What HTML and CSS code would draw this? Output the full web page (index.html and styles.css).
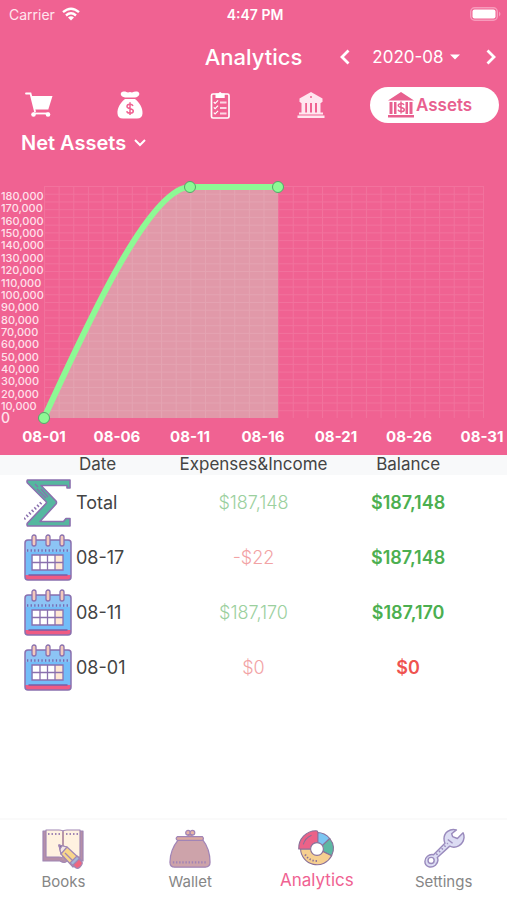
FILE: index.html
```html
<!DOCTYPE html>
<html lang="en">
<head>
<meta charset="utf-8">
<meta name="viewport" content="width=device-width, initial-scale=1">
<title>Analytics</title>
<link rel="stylesheet" href="styles.css">
</head>
<body>
<svg class="defs" aria-hidden="true">
  <defs>
    <symbol id="calendar" viewBox="0 0 48 48">
      <rect x="1" y="6" width="46" height="40" rx="3" fill="#73bdf8"/>
      <path d="M4 7h40a3 3 0 0 1 3 3v8H1v-8a3 3 0 0 1 3-3z" fill="#8cc4f5"/>
      <path d="M1 41h46v2a3 3 0 0 1-3 3H4a3 3 0 0 1-3-3z" fill="#ef5b84"/>
      <rect x="1" y="6" width="46" height="40" rx="3" fill="none" stroke="#8a70ae" stroke-width="1.500"/>
      <path d="M3 16.500h42" stroke="#7668b0" stroke-width="2.400" stroke-dasharray="1.300 2.300"/>
      <path d="M5 41h38" stroke="#7660a8" stroke-width="1.500" stroke-linecap="round"/>
      <rect x="8.500" y="21" width="30" height="15" fill="#fff"/>
      <path d="M31 21h8v15h-8z" fill="#ffe8d3"/>
      <path d="M8 21h31v15H8zM16 21v15M23.500 21v15M31 21v15M8 28.500h31" fill="none" stroke="#8a70ae" stroke-width="1.300"/>
      <g fill="#f3c8bb" stroke="#8a70ae" stroke-width="1.300"><rect x="8" y="1" width="4" height="11" rx="2"/><rect x="22" y="1" width="4" height="11" rx="2"/><rect x="36" y="1" width="4" height="11" rx="2"/></g>
    </symbol>
  </defs>
</svg>
<div class="app">
  <header class="top">
    <div class="status">
      <div class="carrier">Carrier
        <svg width="18" height="14" viewBox="0 0 18 14" fill="none" stroke="#fff" stroke-width="2.400"><path d="M1 5.200q8-7 16 0M4 8.500q5-4.300 10 0"/><path d="M9 13.500 6 10.600q3-2.500 6 0z" fill="#fff" stroke="none"/></svg>
      </div>
      <div class="clock">4:47 PM</div>
      <svg class="battery" width="31" height="14" viewBox="0 0 31 14"><rect x=".7" y=".7" width="26.600" height="12.600" rx="4" fill="none" stroke="#f79bbc" stroke-width="1.400"/><rect x="2.500" y="2.500" width="23" height="9" rx="2" fill="#fff"/><path d="M29 4.500v5q3-2.500 0-5" fill="#f79bbc"/></svg>
    </div>
    <div class="titlebar">
      <h1>Analytics</h1>
      <div class="period">
        <button type="button" aria-label="Previous month"><svg width="10" height="16" viewBox="0 0 10 16"><path d="M8.500 1.500 2 8l6.500 6.500" fill="none" stroke="#fff" stroke-width="2.800"/></svg></button>
        <button type="button" class="month">2020-08<svg width="10" height="6" viewBox="0 0 10 6"><path d="M0 .5h10L5 5.500z" fill="#fff"/></svg></button>
        <button type="button" class="next" aria-label="Next month"><svg width="10" height="16" viewBox="0 0 10 16"><path d="M1.500 1.500 8 8l-6.500 6.500" fill="none" stroke="#fff" stroke-width="2.800"/></svg></button>
      </div>
    </div>
    <nav class="tabs" aria-label="Reports">
      <div class="tab-icons">
        <button type="button" aria-label="Expenses"><svg width="28" height="28" viewBox="0 0 28 28"><path d="M1 2.500h4.500l4.500 18" fill="none" stroke="#fff" stroke-width="1.800" stroke-linecap="round"/><path d="M6 5h21.500l-4.200 13.500H9.500z" fill="#fff"/><path d="M8 22.500h16" stroke="#fff" stroke-width="1.800"/><circle cx="8.500" cy="23.500" r="2.300" fill="#fff"/><circle cx="23" cy="23.500" r="2.300" fill="#fff"/></svg></button>
        <button type="button" aria-label="Income"><svg width="28" height="28" viewBox="0 0 28 28"><path d="M9 6.500C4.500 6 3.500 2 6.500.8 9 0 10.500 1 12 1.600q2-1.200 4 0C18 .4 20 0 22 .8c2.500 1.500 1.500 5.300-3 5.700z" fill="#fff"/><path d="M9 8h10c4 3 8 9 7.500 14.500-.2 3.500-2 5-5.500 5H7c-3.500 0-5.300-1.500-5.500-5C1 17 5 11 9 8z" fill="#fff"/><path d="M17 15c-1-2.500-6-2.300-6 .4 0 3 6.300 1.700 6.300 4.600 0 3-5.800 3-6.600.3M14 11.300v12.600" fill="none" stroke="#f06292" stroke-width="1.500"/></svg></button>
        <button type="button" aria-label="Plans"><svg width="28" height="28" viewBox="0 0 28 28" fill="none" stroke="#fff"><rect x="5.500" y="3" width="17.500" height="24" rx="1.500" stroke-width="1.700"/><path d="M9.500 2.500h2.800q1.800-3 3.600 0h2.800V7H9.500z" fill="#fff" stroke="none"/><path d="m7.800 11 1.300 1.300 3-3m-4.300 7 1.300 1.300 3-3m-4.300 7 1.300 1.300 3-3" stroke-width="1.200"/><path d="M14 11.500h6.500M14 17h6.500M14 22.500h6.500" stroke-width="2" stroke-opacity=".75"/></svg></button>
        <button type="button" aria-label="Bank"><svg width="28" height="28" viewBox="0 0 28 28"><path d="M2.500 7.500 14 1l11.500 6.500V11h-23z" fill="#ffe6ef"/><circle cx="14" cy="6" r="1" fill="#f06292"/><g fill="#ffe6ef"><path d="M3.500 10h21v2h-21zM4.500 12h3.700v10H4.500zM10 12h3v10h-3zM15 12h3v10h-3zM20 12h3.500v10H20z"/><path d="M2 21.500h24v2H2zM.5 24.500h27V27H.5z"/></g></svg></button>
      </div>
      <button type="button" class="tab-active" aria-current="page"><svg width="28" height="28" viewBox="0 0 28 28" fill="#e8608f"><path d="M1 9.500 14 1l13 8.500zM2.500 11h3v12h-3zM7 11h2.500v12H7zM18.500 11H21v12h-2.500zM22.500 11h3v12h-3zM1 24h26v2.500H1z"/><path d="M17 14c-1-2-5.700-1.800-5.700.5 0 2.500 6 1.500 6 4.200 0 2.400-5.300 2.500-6.300.1M14 10.500v12" fill="none" stroke="#e8608f" stroke-width="1.500"/></svg>Assets</button>
    </nav>
    <button type="button" class="metric">Net Assets<svg width="12" height="8" viewBox="0 0 12 8"><path d="m1 1 5 5 5-5" fill="none" stroke="#fff" stroke-width="2"/></svg></button>
    <svg class="chart" viewBox="0 0 507 299" role="img" aria-label="Net assets by day">
      <defs>
        <pattern id="grid" x="44" y="30" width="14.633" height="7.733" patternUnits="userSpaceOnUse"><path d="M0 .5h14.633M.5 0v7.733" fill="none" stroke="#fff" stroke-opacity=".1"/></pattern>
      </defs>
      <path d="M44 262C88 166 150 31 190 31H278V262z" fill="#dcacb0" fill-opacity=".75"/>
      <rect x="44" y="30" width="440" height="232" fill="url(#grid)"/>
      <path d="M44 262C88 166 150 31 190 31H278" fill="none" stroke="#8df994" stroke-width="6"/>
      <g fill="#8df994" stroke="#54a76a" stroke-width="1"><circle cx="44" cy="262" r="5.500"/><circle cx="190" cy="31" r="5.500"/><circle cx="278" cy="31" r="5.500"/></g>
      <g class="y-axis">
        <text x="1" y="44">180,000</text><text x="1" y="56">170,000</text><text x="1" y="69">160,000</text><text x="1" y="81">150,000</text><text x="1" y="93">140,000</text><text x="1" y="106">130,000</text><text x="1" y="118">120,000</text><text x="1" y="131">110,000</text><text x="1" y="143">100,000</text><text x="1" y="155">90,000</text><text x="1" y="168">80,000</text><text x="1" y="180">70,000</text><text x="1" y="192">60,000</text><text x="1" y="205">50,000</text><text x="1" y="217">40,000</text><text x="1" y="229">30,000</text><text x="1" y="242">20,000</text><text x="1" y="254">10,000</text><text class="zero" x="1" y="267">0</text>
      </g>
      <g class="x-axis">
        <text x="44" y="286">08-01</text><text x="117" y="286">08-06</text><text x="190" y="286">08-11</text><text x="263" y="286">08-16</text><text x="336" y="286">08-21</text><text x="409" y="286">08-26</text><text x="482" y="286">08-31</text>
      </g>
    </svg>
  </header>
  <main>
    <table>
      <thead><tr><th>Date</th><th>Expenses&amp;Income</th><th>Balance</th><th class="end"></th></tr></thead>
      <tbody>
        <tr><td><div class="day"><svg width="48" height="48" viewBox="0 0 48 48"><path d="M3.500 1H46v8h-3V6.500H17l15 15.500q1 1.500 0 3L16 42.500h23.500l2.500-3h4V47H3.500q-1-1.500 0-3L22 24.500q1-1 0-2L3.500 4q-1-1.500 0-3z" fill="#55b79f" stroke="#8a70ae" stroke-width="1.600" stroke-linejoin="round"/><path d="m11 5 3 3m-1 2 9 9m-5-9 7 8" stroke="#8a70ae" stroke-width="1.200"/><path d="m0 40 18-17" stroke="#8a70ae" stroke-width="3" stroke-dasharray="1.500 2.200"/></svg>Total</div></td><td class="gain">$187,148</td><td class="gain strong">$187,148</td><td></td></tr>
        <tr><td><div class="day"><svg width="48" height="48"><use href="#calendar"/></svg>08-17</div></td><td class="loss">-$22</td><td class="gain strong">$187,148</td><td></td></tr>
        <tr><td><div class="day"><svg width="48" height="48"><use href="#calendar"/></svg>08-11</div></td><td class="gain">$187,170</td><td class="gain strong">$187,170</td><td></td></tr>
        <tr><td><div class="day"><svg width="48" height="48"><use href="#calendar"/></svg>08-01</div></td><td class="loss">$0</td><td class="loss strong">$0</td><td></td></tr>
      </tbody>
    </table>
  </main>
  <nav class="bottom" aria-label="Main">
    <a href="#books"><svg width="44" height="42" viewBox="0 0 44 42" stroke="#a086b4" stroke-width="1.200" stroke-linejoin="round"><path d="M2 3h40v30H26q-2 3-7 0H2z" fill="#b58fa8"/><path d="M5 2h13q4 0 4 2 0-2 4-2h13v27H26q-4 0-4 3 0-3-4-3H5z" fill="#fff2e0"/><path d="M22 4v28" stroke-width="2" stroke="#b896a8"/><path d="M7 6h12m6 0h12" stroke-width="2" stroke-dasharray="1.500 2"/><path d="m18 17 8 2 13 12-7 8-12-13z" fill="#f8d68b"/><path d="m18 17 8 2-6 7z" fill="#f4e8e4"/><path d="m18 17 3 1-2 3z" fill="#777098"/><path d="m24 25 8 8"/><path d="m36 28 4 4-6 7-5-4z" fill="#a4b8d8"/><path d="m38 31 3 3q1 2-2 5-2 2-4 1l-3-3z" fill="#ef6680"/></svg>Books</a>
    <a href="#wallet"><svg width="44" height="42" viewBox="-1 -1 46 44" stroke="#a184b6" stroke-width="1.300" stroke-linejoin="round"><circle cx="20" cy="4" r="2.500" fill="#e8b5a4"/><circle cx="24.500" cy="4" r="2.500" fill="#e8b5a4"/><path d="M20 6h4v4h-4z" fill="#d99b91"/><path d="M10 11h25c4 5 8 14 8 24q0 5-5 5H6q-5 0-5-5c0-10 5-19 9-24z" fill="#cda3aa"/><path d="M9 8h26q2 2 0 4H9q-3-2 0-4z" fill="#dcaaa0"/><path d="M4 35h36" stroke-width="2.200" stroke-dasharray="1.500 1.800"/></svg>Wallet</a>
    <a href="#analytics" class="current" aria-current="page"><svg width="44" height="42" viewBox="-2 -1 48 46" stroke="#897099" stroke-width="1.200" stroke-linejoin="round"><path d="M22 4a18 18 0 0 1 14 6.500l-8.500 8a7 7 0 0 0-5.500-3z" fill="#7cc6f2"/><path d="M36 10.500a18 18 0 0 1 2 19L28 24.500a7 7 0 0 0-.5-6z" fill="#5cb8a3"/><path d="M38 29.500A18 18 0 0 1 4 22h12a7 7 0 0 0 12 2.500z" fill="#f6cf90"/><path d="M2 22A19 19 0 0 1 21 2q2 0 2 2v11q-7 0-8 7z" fill="#eb6288"/><circle cx="22" cy="22" r="7" fill="#fff"/><path d="M7 17q2-7 9-10" fill="none"/><path d="M9 28q5 8 15 7" fill="none" stroke-width="2" stroke-dasharray="1.500 2"/></svg>Analytics</a>
    <a href="#settings"><svg width="44" height="42" viewBox="-1 -1 46 44" stroke="#9a8bbd" stroke-width="1.500" stroke-linejoin="round"><path d="M35 1c-7-2-13 3-13 9q0 3 1 5L11 27c-5-1-9 3-9 7 0 5 6 8 11 4 3-3 3-6 2-8l13-12c6 3 14-1 15-9q0-3-1-5l-6 6-5-2-1-3z" fill="#dcdcf3"/><circle cx="8.500" cy="33" r="3.200" fill="#fff"/><path d="m26 11 5 4"/><path d="m14 27 12-12" stroke-width="2" stroke-dasharray="1.500 2.500"/></svg>Settings</a>
  </nav>
</div>
</body>
</html>
```
FILE: styles.css
```css
* { box-sizing: border-box; }
body { margin: 0; font-family: Inter, "Liberation Sans", sans-serif; color: #444; background: #fff; }
button { border: 0; padding: 0; background: none; color: inherit; font: inherit; display: flex; align-items: center; }
svg { display: block; flex: none; }
.defs { position: absolute; width: 0; height: 0; }
.app { min-height: 100vh; display: flex; flex-direction: column; }
.top { background: #f06292; color: #fff; }

.status { display: grid; grid-template-columns: 1fr auto 1fr; align-items: center; height: 28px; padding: 0 6px 0 9px; font-size: 14px; }
.carrier { display: flex; align-items: center; gap: 7px; color: #ffe6ef; }
.clock { font-weight: 600; }
.battery { justify-self: end; }

.titlebar { display: grid; grid-template-columns: 1fr auto 1fr; align-items: center; height: 58px; }
h1 { grid-column: 2; margin: 0; font-size: 22px; font-weight: 500; }
.period { display: flex; align-items: center; gap: 22px; padding: 0 11px 0 38px; }
.month { gap: 6px; font-size: 17px; }
.next { margin-left: auto; }

.tabs { display: flex; align-items: center; height: 38px; padding-right: 8px; }
.tab-icons { flex: 1; display: flex; justify-content: space-between; padding: 0 45px 0 25px; }
.tab-active { height: 36px; width: 129px; gap: 1px; border-radius: 18px; padding-left: 17px; background: #fff; color: #e8608f; font-size: 17px; font-weight: 600; }
.metric { height: 38px; padding-left: 21px; gap: 8px; font-size: 20px; font-weight: 600; }

.chart { width: 100%; height: auto; margin-top: -6px; }
.y-axis { font-size: 11px; font-weight: 500; fill: #ffe1eb; }
.zero { font-size: 14px; }
.x-axis { font-size: 15px; font-weight: 700; fill: #fff; text-anchor: middle; }

main { flex: 1; }
table { width: 100%; table-layout: fixed; border-collapse: collapse; font-size: 18px; }
th, td { padding: 0; text-align: center; }
th { width: 31%; height: 20px; padding-bottom: 2px; background: #f8f9fa; font-size: 17px; font-weight: 400; line-height: 18px; }
th:first-child { width: 35%; padding-left: 79px; text-align: left; }
th:nth-child(2) { width: 30%; }
.end { width: 4%; }
td { height: 55px; }
.day { display: flex; align-items: center; gap: 4px; padding-left: 24px; }
.gain { color: #9bd09e; font-weight: 300; }
.loss { color: #f2a3a5; font-weight: 300; }
.gain.strong { color: #4caf50; font-weight: 600; }
.loss.strong { color: #ef5350; font-weight: 600; }

.bottom { display: grid; grid-template-columns: repeat(4, 1fr); height: 82px; border-top: 2px solid #fafafa; }
.bottom a { display: flex; flex-direction: column; align-items: center; padding-top: 8px; gap: 3px; color: #868686; font-size: 15px; line-height: 18px; text-decoration: none; }
.bottom .current { color: #f06292; font-size: 17px; gap: 1px; }
```
